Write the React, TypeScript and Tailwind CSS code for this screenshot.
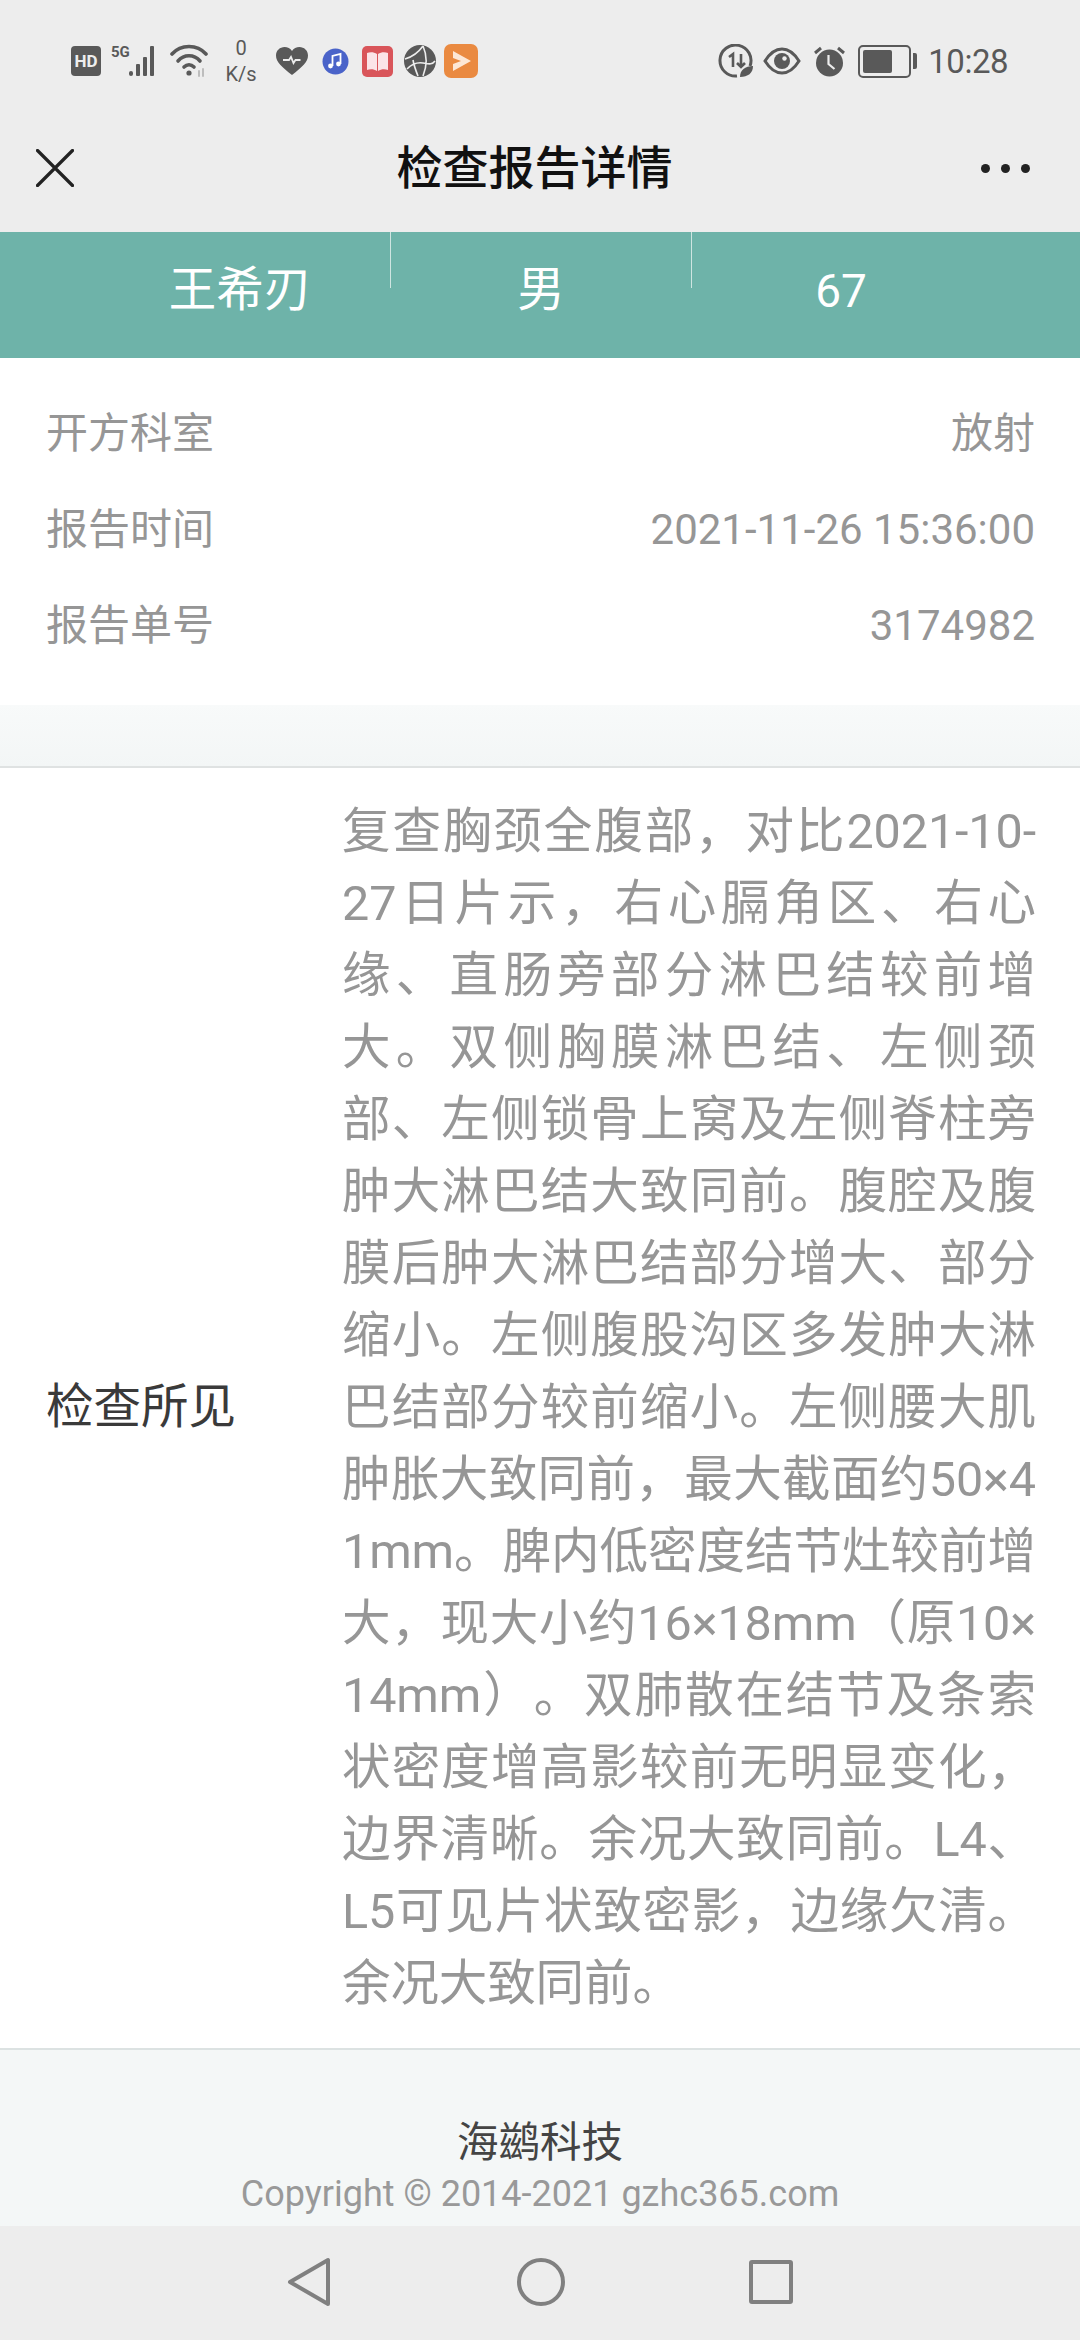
import React from 'react';

const findings =
  '复查胸颈全腹部，对比2021-10-27日片示，右心膈角区、右心缘、直肠旁部分淋巴结较前增大。双侧胸膜淋巴结、左侧颈部、左侧锁骨上窝及左侧脊柱旁肿大淋巴结大致同前。腹腔及腹膜后肿大淋巴结部分增大、部分缩小。左侧腹股沟区多发肿大淋巴结部分较前缩小。左侧腰大肌肿胀大致同前，最大截面约50×41mm。脾内低密度结节灶较前增大，现大小约16×18mm（原10×14mm）。双肺散在结节及条索状密度增高影较前无明显变化，边界清晰。余况大致同前。L4、L5可见片状致密影，边缘欠清。余况大致同前。';

const infoRows = [
  { label: '开方科室', value: '放射' },
  { label: '报告时间', value: '2021-11-26 15:36:00' },
  { label: '报告单号', value: '3174982' },
];

const StatusBar: React.FC = () => (
  <div className="flex h-[122px] items-center justify-between pl-[71px] pr-[72px] text-[#595959]">
    <div className="flex items-center">
      <div className="flex h-[30px] w-[30px] items-center justify-center rounded-[4px] bg-[#595959] text-[17px] font-bold leading-none text-[#ededed]">
        HD
      </div>
      <div className="relative ml-[10px] h-[32px] w-[52px]">
        <span className="absolute left-0 top-[-3px] text-[15px] font-bold leading-[20px]">5G</span>
        <svg className="absolute inset-0" width="52" height="32" viewBox="0 0 52 32" fill="#595959">
          <rect x="18" y="26" width="4" height="5" rx="2" />
          <rect x="25" y="19" width="4" height="12" rx="1" />
          <rect x="32" y="12" width="4" height="19" rx="1" />
          <rect x="39" y="1" width="4" height="30" rx="1" />
        </svg>
      </div>
      <svg className="ml-[7px]" width="38" height="34" viewBox="0 0 38 34" fill="none" stroke="#595959" strokeWidth="3.6" strokeLinecap="round">
        <path d="M2 10C11 0 27 0 36 10" />
        <path d="M8 17C14 10 24 10 30 17" />
        <path d="M14 23C17 20 21 20 24 23" />
        <circle cx="19" cy="29" r="2.6" fill="#595959" stroke="none" />
        <path d="M29 27v5M33 25v7" stroke="#bdbdbd" strokeWidth="2" />
      </svg>
      <div className="ml-[15px] flex w-[36px] flex-col items-center text-[20px] leading-[26px]">
        <span>0</span>
        <span>K/s</span>
      </div>
      <svg className="ml-[17px]" width="32" height="28" viewBox="0 0 32 28">
        <path d="M16 28C6 20 0 15 0 8.500C0 3.500 4 0 8.500 0C11.500 0 14.500 1.500 16 4C17.500 1.500 20.500 0 23.500 0C28 0 32 3.500 32 8.500C32 15 26 20 16 28Z" fill="#595959" />
        <path d="M7 13h6l2-3 2.500 6 2-3h5" fill="none" stroke="#ededed" strokeWidth="1.800" />
      </svg>
      <svg className="ml-[14px]" width="27" height="27" viewBox="0 0 27 27">
        <circle cx="13.500" cy="13.500" r="13" fill="#4a63c9" />
        <path d="M10.500 18V8l8-2v10" fill="none" stroke="#fff" strokeWidth="1.800" />
        <circle cx="8.500" cy="18" r="2.400" fill="#fff" />
        <circle cx="16.500" cy="16" r="2.400" fill="#fff" />
      </svg>
      <svg className="ml-[13px]" width="31" height="31" viewBox="0 0 31 31">
        <rect width="31" height="31" rx="5" fill="#d9555a" />
        <path d="M15 8C12 6 8 6 5 7v17c3-1 7-1 10 1ZM16 8c3-2 7-2 10-1v17c-3-1-7-1-10 1Z" fill="#fbe4e8" />
      </svg>
      <svg className="ml-[11px]" width="32" height="32" viewBox="0 0 32 32">
        <circle cx="16" cy="16" r="16" fill="#595959" />
        <path d="M1 14C8 12 14 8 19 1M19 1c4 9 4 20 0 30M3 24c5-5 10-7 16-6s9 2 12-2M9 15c1 6 3 11 5 16" fill="none" stroke="#ededed" strokeWidth="1.600" />
      </svg>
      <svg className="ml-[8px]" width="34" height="34" viewBox="0 0 34 34">
        <rect width="34" height="34" rx="7" fill="#ea8a41" />
        <path d="M9 7L27 17L9 27V20L17 17L9 14Z" fill="#fde7d5" />
      </svg>
    </div>
    <div className="flex items-center">
      <svg width="36" height="34" viewBox="0 0 36 34" fill="none" stroke="#595959">
        <path d="M32 22A15.500 15.500 0 1 0 19 32" strokeWidth="3" />
        <path d="M11 13l4-3v13M23 10v13M19 19l4 4 4-4" strokeWidth="2.600" />
        <path d="M22 33C22 26 27 22 35 22C35 29 30 33 22 33Z" fill="#595959" stroke="none" />
      </svg>
      <svg className="ml-[9px]" width="38" height="28" viewBox="0 0 38 28">
        <path d="M2 14C7 6 12 2 19 2C26 2 31 6 36 14C31 22 26 26 19 26C12 26 7 22 2 14Z" fill="none" stroke="#595959" strokeWidth="3" />
        <circle cx="19" cy="14" r="8" fill="#595959" />
        <circle cx="21.500" cy="11.500" r="2.200" fill="#ededed" />
      </svg>
      <svg className="ml-[12px]" width="33" height="31" viewBox="0 0 33 31">
        <circle cx="16.500" cy="17" r="13.500" fill="#595959" />
        <path d="M15.500 9v9l6 5" fill="none" stroke="#ededed" strokeWidth="2.200" />
        <path d="M2 7l6-5M31 7l-6-5" stroke="#595959" strokeWidth="3" />
      </svg>
      <div className="ml-[12px] flex items-center">
        <div className="flex h-[33px] w-[53px] items-center rounded-[5px] border-[2.500px] border-[#595959] p-[3px]">
          <div className="h-full w-[29px] rounded-[2px] bg-[#595959]" />
        </div>
        <div className="ml-[2px] h-[16px] w-[4px] rounded-r-[2px] bg-[#595959]" />
      </div>
      <span className="ml-[11px] text-[33px] leading-none tracking-[-0.5px]">10:28</span>
    </div>
  </div>
);

const NavBar: React.FC = () => (
  <div className="relative flex h-[110px] items-center justify-between pb-[18px] pl-[36px] pr-[50px]">
    <svg width="38" height="38" viewBox="0 0 38 38" stroke="#222" strokeWidth="3.200" strokeLinecap="round">
      <path d="M1.500 1.500L36.500 36.500M36.500 1.500L1.500 36.500" />
    </svg>
    <span className="ml-[14px] text-[46px] font-medium leading-none text-[#111]">检查报告详情</span>
    <div className="flex gap-[11px]">
      <div className="h-[9px] w-[9px] rounded-full bg-[#222]" />
      <div className="h-[9px] w-[9px] rounded-full bg-[#222]" />
      <div className="h-[9px] w-[9px] rounded-full bg-[#222]" />
    </div>
  </div>
);

const PatientBar: React.FC = () => (
  <div className="flex h-[126px] bg-[#6eb3a9] px-[90px] text-[47.500px] text-white">
    <div className="flex w-[300px] items-center justify-center pb-[8px]">王希刃</div>
    <div className="h-[56px] w-px bg-[#cfe5e1]" />
    <div className="flex w-[300px] items-center justify-center pb-[8px]">男</div>
    <div className="h-[56px] w-px bg-[#cfe5e1]" />
    <div className="flex w-[298px] items-center justify-center pb-[8px] text-[46px]">67</div>
  </div>
);

export default function App() {
  return (
    <div className="flex h-[2340px] w-[1080px] flex-col overflow-hidden bg-white font-['Roboto','Noto_Sans_CJK_SC',sans-serif]">
      <div className="bg-[#ededed]">
        <StatusBar />
        <NavBar />
      </div>
      <PatientBar />

      <div className="bg-white pb-[32px] pl-[46px] pr-[45px] pt-[27px] text-[42px] text-[#969696]">
        {infoRows.map((row) => (
          <div key={row.label} className="flex h-[96px] items-center justify-between">
            <span>{row.label}</span>
            <span>{row.value}</span>
          </div>
        ))}
      </div>

      <div className="h-[63px] border-b-2 border-[#dfe2e2] bg-gradient-to-b from-[#f8fafa] to-[#f3f6f6]" />

      <div className="flex items-center border-b-2 border-[#dce2e2] py-[28px] pl-[46px] pr-[44px]">
        <div className="w-[296px] shrink-0 text-[47.500px] text-[#3a3a3a]">检查所见</div>
        <p className="w-[694px] break-all text-justify text-[48.500px] leading-[72px] tracking-[-0.1px] text-[#969696] [text-spacing-trim:space-all]">
          {findings}
        </p>
      </div>

      <div className="flex h-[176px] flex-col items-center bg-[#f4f7f7] pt-[65px]">
        <span className="text-[41.500px] leading-[56px] text-[#444]">海鹚科技</span>
        <span className="text-[36px] leading-[46px] text-[#999]">Copyright © 2014-2021 gzhc365.com</span>
      </div>

      <div className="flex flex-1 items-center justify-center bg-[#ededed] pb-[2px]">
        <svg width="44" height="50" viewBox="0 0 44 50" fill="none" stroke="#808080" strokeWidth="4" strokeLinejoin="round" className="mr-[185px]">
          <path d="M41 3V47L3 25Z" />
        </svg>
        <svg width="50" height="50" viewBox="0 0 50 50" fill="none" stroke="#808080" strokeWidth="4" className="mr-[183px]">
          <circle cx="25" cy="25" r="22" />
        </svg>
        <div className="h-[44px] w-[44px] rounded-[3px] border-[4px] border-[#808080]" />
      </div>
    </div>
  );
}
